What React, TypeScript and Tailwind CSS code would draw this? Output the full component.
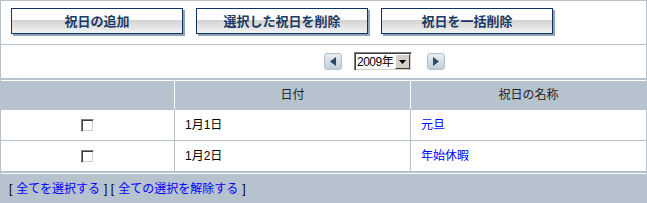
import React from "react";

const font = "font-['Liberation_Sans','Noto_Sans_CJK_JP',sans-serif]";

function Btn({ label }: { label: string }) {
  return (
    <div className="w-[172px] h-[26px] shrink-0 border border-[#0c3566] shadow-[2px_2px_0_#93a3b6] bg-[linear-gradient(to_bottom,#ffffff_0%,#ffffff_44%,#d2d2d2_46%,#f3f3f3_100%)] flex items-center justify-center text-[13px] font-bold text-[#1b3a64] leading-none">
      {label}
    </div>
  );
}

function Arrow({ dir }: { dir: "l" | "r" }) {
  return (
    <div className="w-[18px] h-[17px] rounded-[3px] border border-[#b3bfcb] bg-[linear-gradient(to_bottom,#e9edf1,#c3ced9)] flex items-center justify-center">
      <svg width="8" height="9" viewBox="0 0 8 9">
        {dir === "l" ? (
          <polygon points="7,0 7,9 1,4.5" fill="#2c4a64" />
        ) : (
          <polygon points="1,0 1,9 7,4.5" fill="#2c4a64" />
        )}
      </svg>
    </div>
  );
}

function Check() {
  return (
    <div className="w-[13px] h-[13px] bg-white border border-t-[#808080] border-l-[#808080] border-b-[#ffffff] border-r-[#ffffff] shadow-[inset_1px_1px_0_#404040,inset_-1px_-1px_0_#d4d0c8]" />
  );
}

export default function App() {
  const rows = [
    { date: "1月1日", name: "元旦", h: "h-[31px] border-b" },
    { date: "1月2日", name: "年始休暇", h: "h-[32px] border-b-2" },
  ];
  return (
    <div className={`w-[647px] h-[203px] overflow-hidden bg-white border-x border-t border-[#b6c3cf] text-[12px] ${font}`}>
      <div className="h-[44px] flex items-start pt-[7px] pl-[10px] gap-[13px] border-b border-[#b6c3cf]">
        <Btn label="祝日の追加" />
        <Btn label="選択した祝日を削除" />
        <Btn label="祝日を一括削除" />
      </div>
      <div className="h-[35px] border-b-2 border-[#b6c3cf] flex items-center pl-[323px]">
        <Arrow dir="l" />
        <div className="ml-[12px] w-[58px] h-[19px] bg-white border border-t-[#808080] border-l-[#808080] border-b-[#ffffff] border-r-[#ffffff] shadow-[inset_1px_1px_0_#404040,inset_-1px_-1px_0_#d4d0c8] flex items-stretch p-[1px]">
          <div className="flex-1 min-w-0 overflow-hidden whitespace-nowrap flex items-center pl-[1px] text-[12px] tracking-[-0.5px] text-black leading-none">2009年</div>
          <div className="w-[15px] shrink-0 bg-[#d4d0c8] border border-t-[#ffffff] border-l-[#ffffff] border-b-[#404040] border-r-[#404040] flex items-center justify-center">
            <svg width="7" height="4" viewBox="0 0 7 4">
              <polygon points="0,0 7,0 3.5,4" fill="#000" />
            </svg>
          </div>
        </div>
        <div className="ml-[15px]">
          <Arrow dir="r" />
        </div>
      </div>
      <div className="flex h-[30px] bg-[#b6c3cf] border-t border-b border-t-white border-b-[#b6c3cf] text-[#222]">
        <div className="w-[173px]" />
        <div className="w-[236px] border-l border-white flex items-center justify-center">日付</div>
        <div className="w-[236px] border-l border-white flex items-center justify-center">祝日の名称</div>
      </div>
      {rows.map((r) => (
        <div key={r.date} className={`flex ${r.h} border-[#b6c3cf] bg-white`}>
          <div className="w-[173px] flex items-center justify-center">
            <Check />
          </div>
          <div className="w-[236px] border-l border-[#b6c3cf] flex items-center pl-[10px] text-black">{r.date}</div>
          <div className="w-[236px] border-l border-[#b6c3cf] flex items-center pl-[10px]">
            <a className="text-[#0000ff]">{r.name}</a>
          </div>
        </div>
      ))}
      <div className="h-[40px] bg-[#b6c3cf] border-t border-white flex items-start pt-[6px] pl-[8px] text-black">
        [ <a className="text-[#0000ff] mx-[4px]">全てを選択する</a> ]&nbsp;[ <a className="text-[#0000ff] mx-[4px]">全ての選択を解除する</a> ]
      </div>
    </div>
  );
}
